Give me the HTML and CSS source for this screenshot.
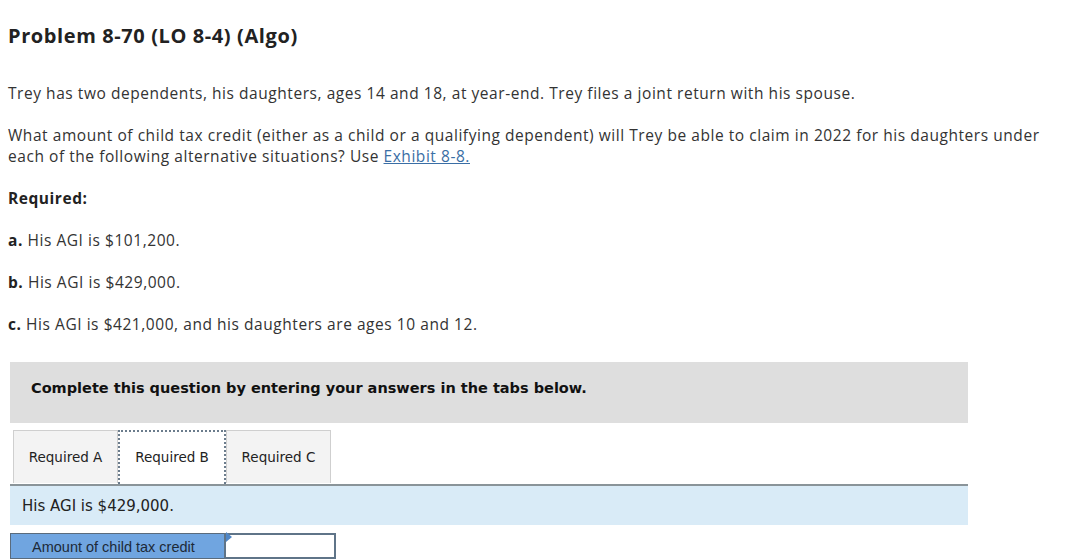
FILE: index.html
```html
<!DOCTYPE html>
<html lang="en">
<head>
    <meta charset="UTF-8">
    <title>Problem 8-70 (LO 8-4) (Algo)</title>
    <link rel="stylesheet" href="styles.css">
</head>
<body>
    <h1 class="title">Problem 8-70 (LO 8-4) (Algo)</h1>

    <p class="text">Trey has two dependents, his daughters, ages 14 and 18, at year-end. Trey files a joint return with his spouse.</p>
    <p class="text">What amount of child tax credit (either as a child or a qualifying dependent) will Trey be able to claim in 2022 for his daughters under each of the following alternative situations? Use <a href="#">Exhibit 8-8.</a></p>

    <p class="text"><b>Required:</b></p>
    <p class="text"><b>a.</b> His AGI is $101,200.</p>
    <p class="text"><b>b.</b> His AGI is $429,000.</p>
    <p class="text"><b>c.</b> His AGI is $421,000, and his daughters are ages 10 and 12.</p>

    <div class="answer-area">
        <div class="notice">Complete this question by entering your answers in the tabs below.</div>

        <div class="tabs">
            <div class="tab">Required A</div>
            <div class="tab active">Required B</div>
            <div class="tab">Required C</div>
        </div>

        <div class="tab-body">His AGI is $429,000.</div>

        <div class="answer-row">
            <div class="answer-label">Amount of child tax credit</div>
            <div class="answer-input"><input type="text"></div>
        </div>
    </div>
</body>
</html>
```

FILE: styles.css
```css
body {
    margin: 0;
    padding: 0 8px;
    font-family: "Open Sans", Arial, sans-serif;
    color: #333;
    background: #fff;
}
.title {
    font-size: 20px;
    font-weight: bold;
    letter-spacing: 0.6px;
    color: #222;
    margin: 22px 0 0;
}
.text {
    font-size: 15.5px;
    letter-spacing: 0.55px;
    line-height: 21px;
    margin: 0 0 21px;
}
.title + .text {
    margin-top: 34px;
}
.text b {
    color: #222;
}
a {
    color: #3a6ea5;
}
.answer-area {
    margin-left: 2px;
    margin-top: 27px;
    width: 958px;
}
.notice {
    background: #dedede;
    height: 61px;
    line-height: 52px;
    padding-left: 21px;
    font-family: Tahoma, "DejaVu Sans", sans-serif;
    font-weight: bold;
    font-size: 14.5px;
    color: #111;
}
.tabs {
    display: flex;
    margin-top: 7px;
    padding-left: 3px;
    border-bottom: 2px solid #8a9499;
}
.tab {
    width: 103px;
    height: 52px;
    line-height: 53px;
    text-align: center;
    background: #f3f3f3;
    border: 1px solid #cfcfcf;
    border-bottom: none;
    font-family: Tahoma, "DejaVu Sans", sans-serif;
    font-size: 13.5px;
    color: #222;
}
.tab.active {
    width: 104px;
    background: #fff;
    border: 2px dotted #6b7c8c;
    border-bottom: none;
    line-height: 51px;
}
.tab-body {
    background: #d9ebf7;
    height: 39px;
    line-height: 40px;
    padding-left: 12px;
    font-family: Verdana, "DejaVu Sans", sans-serif;
    font-size: 15px;
    color: #222;
}
.answer-row {
    display: flex;
    margin-top: 8px;
}
.answer-label {
    width: 192px;
    height: 24px;
    line-height: 26px;
    padding-left: 21px;
    background: #70a5e0;
    border: 1px solid #5a6b7c;
    border-right: none;
    font-family: "Liberation Sans", Arial, sans-serif;
    font-size: 14.5px;
    color: #1d2a38;
}
.answer-input {
    position: relative;
    border: 2px solid #5f7488;
}
.answer-input::before {
    content: "";
    position: absolute;
    top: -3px;
    left: 0;
    border-top: 5px solid transparent;
    border-bottom: 5px solid transparent;
    border-left: 6px solid #4f86c6;
}
.answer-input input {
    width: 108px;
    height: 22px;
    border: none;
    padding: 0;
    display: block;
}
```
